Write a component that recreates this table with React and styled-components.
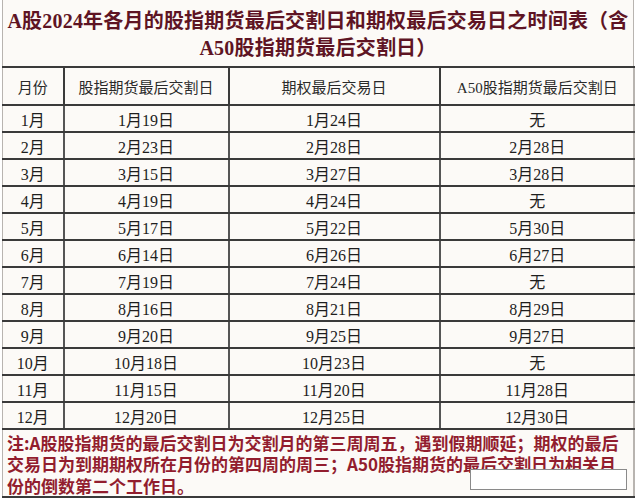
import React from "react";
import styled, { createGlobalStyle } from "styled-components";

const GlobalStyle = createGlobalStyle`
  html, body {
    margin: 0;
    padding: 0;
    background: #ffffff;
  }
`;

const Page = styled.div`
  width: 635px;
  height: 500px;
  overflow: hidden;
  background: #ffffff;
`;

const Frame = styled.div`
  position: relative;
  margin-left: 2px;
  width: 630px;
  border-left: 1px solid #b8b4b0;
  border-right: 1px solid #b8b4b0;
  background: #fcfaf7;
  font-family: "Liberation Serif", "Noto Sans CJK SC", serif;
`;

const Title = styled.h1`
  margin: 0;
  height: 66px;
  box-sizing: border-box;
  padding-top: 8px;
  font-size: 20px;
  line-height: 27px;
  font-weight: bold;
  color: #5e1424;
  text-align: center;
  white-space: nowrap;
  letter-spacing: 0.2px;
`;

const Table = styled.table`
  width: 632px;
  margin-left: -1px;
  border-collapse: collapse;
  table-layout: fixed;
  color: #1e1e1e;
`;

const edge = `
  &:first-child { border-left: 1px solid #b8b4b0; }
  &:last-child { border-right: 1px solid #b8b4b0; }
`;

const HeadCell = styled.th`
  height: 36px;
  padding: 0;
  border: 2px solid #3a3a3a;
  font-size: 15px;
  font-weight: normal;
  color: #2a2a2a;
  text-align: center;
  white-space: nowrap;
  ${edge}
`;

const Cell = styled.td`
  height: 25px;
  padding: 0;
  border: 2px solid #3a3a3a;
  border-left-color: #555;
  border-right-color: #555;
  font-size: 16px;
  text-align: center;
  white-space: nowrap;
  ${edge}
`;

const NoteCell = styled.td`
  padding: 0 0 0 4px;
  vertical-align: top;
  border: 2px solid #3a3a3a;
  border-left: 1px solid #b8b4b0;
  border-right: 1px solid #b8b4b0;
`;

const NoteText = styled.div`
  height: 66px;
  box-sizing: border-box;
  padding-top: 1.5px;
  font-size: 17px;
  line-height: 21.5px;
  font-weight: bold;
  color: #921d2e;
  white-space: nowrap;
  font-family: "Noto Sans CJK SC", "Liberation Serif", serif;
`;

const Cover = styled.div`
  position: absolute;
  left: 467px;
  top: 469px;
  width: 155px;
  height: 19px;
  background: #ffffff;
  border: 1px solid #8a8a8a;
`;

const rows = [
  ["1月", "1月19日", "1月24日", "无"],
  ["2月", "2月23日", "2月28日", "2月28日"],
  ["3月", "3月15日", "3月27日", "3月28日"],
  ["4月", "4月19日", "4月24日", "无"],
  ["5月", "5月17日", "5月22日", "5月30日"],
  ["6月", "6月14日", "6月26日", "6月27日"],
  ["7月", "7月19日", "7月24日", "无"],
  ["8月", "8月16日", "8月21日", "8月29日"],
  ["9月", "9月20日", "9月25日", "9月27日"],
  ["10月", "10月18日", "10月23日", "无"],
  ["11月", "11月15日", "11月20日", "11月28日"],
  ["12月", "12月20日", "12月25日", "12月30日"],
];

export default function App() {
  return (
    <Page>
      <GlobalStyle />
      <Frame>
        <Title>
          A股2024年各月的股指期货最后交割日和期权最后交易日之时间表（含
          <br />
          A50股指期货最后交割日）
        </Title>
        <Table>
          <colgroup>
            <col style={{ width: 61 }} />
            <col style={{ width: 165 }} />
            <col style={{ width: 211 }} />
            <col style={{ width: 195 }} />
          </colgroup>
          <thead>
            <tr>
              <HeadCell>月份</HeadCell>
              <HeadCell>股指期货最后交割日</HeadCell>
              <HeadCell>期权最后交易日</HeadCell>
              <HeadCell>A50股指期货最后交割日</HeadCell>
            </tr>
          </thead>
          <tbody>
            {rows.map((r) => (
              <tr key={r[0]}>
                {r.map((v, i) => (
                  <Cell key={i}>{v}</Cell>
                ))}
              </tr>
            ))}
            <tr>
              <NoteCell colSpan={4}>
                <NoteText>
                  注:A股股指期货的最后交割日为交割月的第三周周五，遇到假期顺延；期权的最后
                  <br />
                  交易日为到期期权所在月份的第四周的周三；A50股指期货的最后交割日为相关月
                  <br />
                  份的倒数第二个工作日。
                </NoteText>
              </NoteCell>
            </tr>
          </tbody>
        </Table>
        <Cover />
      </Frame>
    </Page>
  );
}
